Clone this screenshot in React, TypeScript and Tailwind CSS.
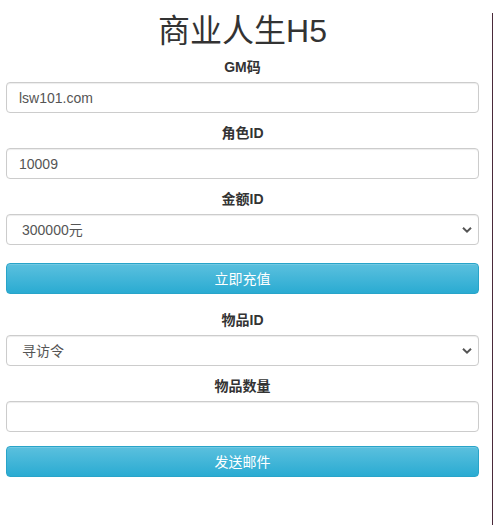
import { useState } from "react";

const font = "font-['Liberation_Sans','Noto_Sans_CJK_SC',sans-serif]";

function Label({ children }: { children: React.ReactNode }) {
    return (
        <label className="block text-center text-sm font-bold leading-5 text-[#333] mb-[5px]">
            {children}
        </label>
    );
}

const inputCls =
    "block w-full h-[31px] px-3 text-sm text-[#555] bg-white border border-[#ccc] rounded shadow-[inset_0_1px_1px_rgba(0,0,0,0.075)] outline-none";

function Select({ value, options }: { value: string; options: string[] }) {
    const [v, setV] = useState(value);
    return (
        <div className="relative">
            <select
                value={v}
                onChange={(e) => setV(e.target.value)}
                className={inputCls + " appearance-none pl-[15px] pr-8"}
            >
                {options.map((o) => (
                    <option key={o}>{o}</option>
                ))}
            </select>
            <svg
                className="pointer-events-none absolute right-[7px] top-1/2 -translate-y-1/2"
                width="10"
                height="7"
                viewBox="0 0 10 7"
            >
                <path d="M1 1.2 5 5.2 9 1.2" fill="none" stroke="#555" strokeWidth="2" />
            </svg>
        </div>
    );
}

function InfoButton({ children }: { children: React.ReactNode }) {
    return (
        <button className="block w-full h-[31px] text-sm text-white rounded border border-[#28a4c9] bg-[linear-gradient(to_bottom,#5bc0de_0,#2aabd2_100%)] shadow-[inset_0_1px_0_rgba(255,255,255,0.15)]">
            {children}
        </button>
    );
}

export default function App() {
    return (
        <div className={`${font} w-[493px] min-h-[525px] bg-white border-r border-[#4a2a3a]`}>
            <div className="pl-[6px] pr-[13px]">
                <h1 className="mt-[13px] mb-[8px] text-center text-[32px] leading-[36px] font-normal text-[#333]">
                    商业人生H5
                </h1>

                <div className="mb-[10px]">
                    <Label>GM码</Label>
                    <input className={inputCls} defaultValue="lsw101.com" />
                </div>

                <div className="mb-[10px]">
                    <Label>角色ID</Label>
                    <input className={inputCls} defaultValue="10009" />
                </div>

                <div className="mb-[18px]">
                    <Label>金额ID</Label>
                    <Select value="300000元" options={["300000元", "100000元", "50000元"]} />
                </div>

                <div className="mb-[16px]">
                    <InfoButton>立即充值</InfoButton>
                </div>

                <div className="mb-[10px]">
                    <Label>物品ID</Label>
                    <Select value="寻访令" options={["寻访令", "金币", "钻石"]} />
                </div>

                <div className="mb-[14px]">
                    <Label>物品数量</Label>
                    <input className={inputCls} defaultValue="" />
                </div>

                <InfoButton>发送邮件</InfoButton>
            </div>
        </div>
    );
}
